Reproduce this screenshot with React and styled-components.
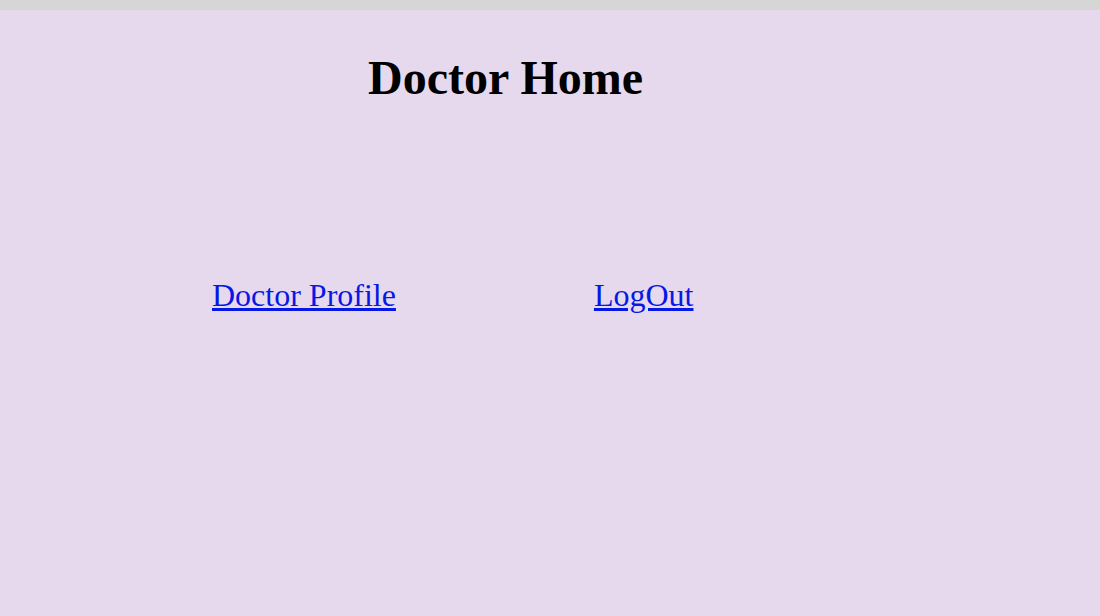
import styled, { createGlobalStyle } from 'styled-components';

const GlobalStyle = createGlobalStyle`
  html, body {
    margin: 0;
    padding: 0;
    background-color: #e6d9ee;
    font-family: "Liberation Serif", "Times New Roman", serif;
  }
`;

const Page = styled.div`
  min-height: 100vh;
  background-color: #e6d9ee;
`;

const TopBar = styled.div`
  height: 10px;
  background-color: #d6d6d6;
`;

const Header = styled.header`
  padding: 40px 0 0 368px;
`;

const Title = styled.h1`
  margin: 0;
  font-size: 48px;
  font-weight: bold;
  line-height: normal;
  color: #000;
`;

const Nav = styled.nav`
  display: flex;
  gap: 198px;
  padding-left: 212px;
  margin-top: 172px;
`;

const NavLink = styled.a`
  font-size: 32px;
  line-height: normal;
  color: #0618e6;
  text-decoration: underline;
`;

const App = () => {
  return (
    <Page>
      <GlobalStyle />
      <TopBar />
      <Header>
        <Title>Doctor Home</Title>
      </Header>
      <Nav>
        <NavLink href="#">Doctor Profile</NavLink>
        <NavLink href="#">LogOut</NavLink>
      </Nav>
    </Page>
  );
};

export default App;
